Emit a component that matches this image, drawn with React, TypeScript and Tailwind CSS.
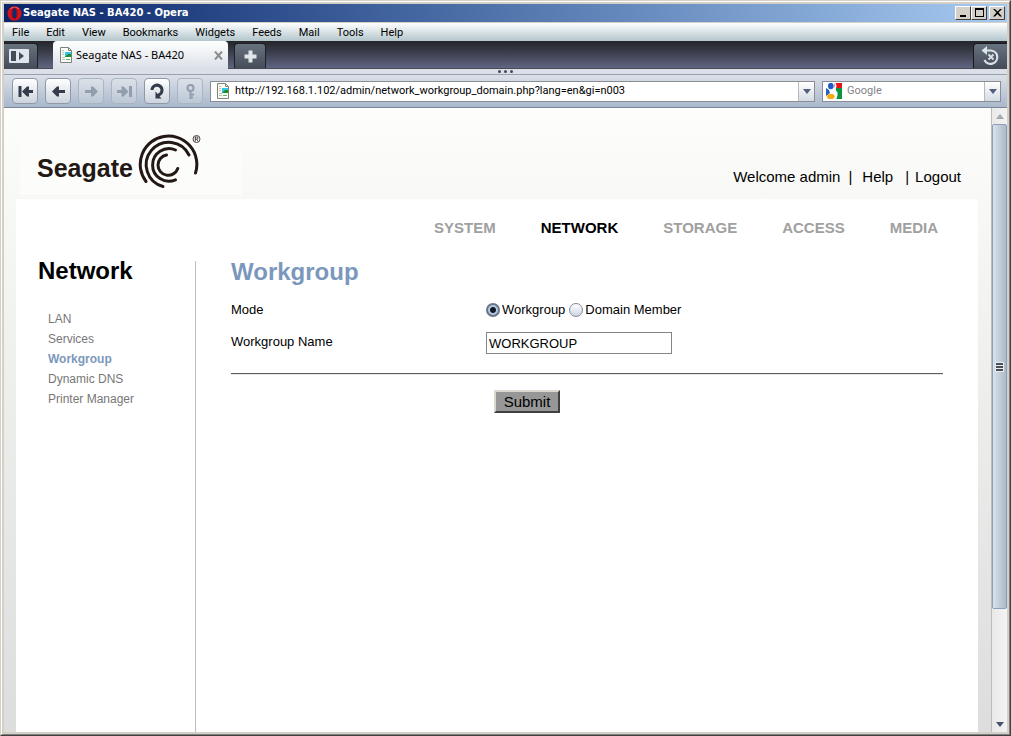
import React, { useState } from 'react';

const menuItems = ['File', 'Edit', 'View', 'Bookmarks', 'Widgets', 'Feeds', 'Mail', 'Tools', 'Help'];
const sections = ['SYSTEM', 'NETWORK', 'STORAGE', 'ACCESS', 'MEDIA'];
const sideLinks = ['LAN', 'Services', 'Workgroup', 'Dynamic DNS', 'Printer Manager'];

const PageIcon = () => (
  <svg width="14" height="16" viewBox="0 0 14 16" className="shrink-0" aria-hidden="true">
    <path d="M1.5 .5h8l3 3v12h-11z" fill="#fbfcf8" stroke="#7c8577" />
    <path d="M9.5 .5v3h3" fill="none" stroke="#7c8577" />
    <path d="M3 3.500h2M3 5.500h2M3 7.500h2M3 10.500h3M3 12.500h3" stroke="#b9c0b4" />
    <rect x="6" y="5" width="6" height="5" fill="#35c5ea" />
    <path d="M6 10l3-3h3v3z" fill="#18902c" />
    <path d="M7 12.500h4" stroke="#5cb567" />
  </svg>
);

const OperaIcon = () => (
  <svg width="15" height="15" viewBox="0 0 15 15" className="shrink-0" aria-hidden="true">
    <ellipse cx="7.5" cy="7.5" rx="7" ry="7.3" fill="#d31219" />
    <path d="M3 3C5 .8 10 .8 12 3" fill="none" stroke="#f06a66" />
    <ellipse cx="7.5" cy="7.5" rx="2.2" ry="5.2" fill="#0d2c72" />
    <ellipse cx="7.5" cy="7.5" rx="2.6" ry="5.6" fill="none" stroke="#8d0a10" strokeWidth=".8" />
  </svg>
);

const GoogleIcon = () => (
  <svg width="16" height="16" viewBox="0 0 16 16" className="shrink-0" aria-hidden="true">
    <path d="M8 0h8v6H9z" fill="#e8121c" />
    <path d="M10 5h6v11H9c3-3 0-5 1-11z" fill="#0a9440" />
    <path d="M0 5l3 2 1 3-4 3z" fill="#2660c8" />
    <ellipse cx="4.8" cy="3" rx="2.8" ry="3.2" fill="#1d5bc9" />
    <path d="M8.500 0c2 2 1 5 0 7 3 2 3 5 1 9" fill="none" stroke="#fff" strokeWidth="1.5" />
    <ellipse cx="4.8" cy="13.4" rx="3.8" ry="2.6" fill="#f4ae13" />
  </svg>
);

const DropArrow = () => (
  <svg width="8" height="5" viewBox="0 0 8 5" aria-hidden="true">
    <path d="M0 0h8L4 5z" fill="#535f81" />
  </svg>
);

const SeagateSwirl = () => (
  <svg width="64" height="56" viewBox="0 0 64 56" className="shrink-0" aria-hidden="true">
    <g fill="none" stroke="#231815" strokeWidth="3" strokeLinecap="round">
      <path d="M8 48.500A28.300 28.300 0 1 1 57.500 40" />
      <path d="M25 53.500A22.500 22.500 0 1 1 51 22" />
      <path d="M37.500 46.800A16.300 16.300 0 1 1 37.500 17" />
      <path d="M28.500 22A10.200 10.200 0 1 0 39.800 35.500" />
    </g>
    <circle cx="58.5" cy="6" r="3.500" fill="none" stroke="#231815" strokeWidth=".8" />
    <path d="M57.300 8.300V4h1.500a1.100 1.100 0 0 1 0 2.200h-1.500M58.800 6.200l1.200 2.100" fill="none" stroke="#231815" strokeWidth=".8" />
  </svg>
);

const navButtons = [
  {
    label: 'Rewind',
    enabled: true,
    icon: <><path d="M3 3v11M16 8.500H9" /><path d="M5 8.500L10 3.500h2v3L10.500 8.500l1.500 2v3h-2z" fill="currentColor" stroke="none" /></>
  },
  {
    label: 'Back',
    enabled: true,
    icon: <><path d="M15 8.500H6" /><path d="M2 8.500L7 3.500h2v3L7.500 8.500l1.500 2v3H7z" fill="currentColor" stroke="none" /></>
  },
  {
    label: 'Forward',
    enabled: false,
    icon: <><path d="M2 8.500h9" /><path d="M15 8.500L10 3.500H8v3L9.500 8.500 8 10.500v3h2z" fill="currentColor" stroke="none" /></>
  },
  {
    label: 'Fast forward',
    enabled: false,
    icon: <><path d="M14.500 3v11M1 8.500h7" /><path d="M12.500 8.500l-5-5h-2v3L7 8.500l-1.500 2v3h2z" fill="currentColor" stroke="none" /></>
  },
  {
    label: 'Reload',
    enabled: true,
    icon: <><path d="M3 7A5 5 0 1 1 10.500 11.500L8 13" strokeWidth="3" /><path d="M6.500 8.500v7h6z" fill="currentColor" stroke="none" /></>
  },
  {
    label: 'Wand',
    enabled: false,
    icon: (
      <g strokeWidth="2">
        <circle cx="8.500" cy="5" r="3" />
        <path d="M8.500 8V16M9 11.500h3M9 14.500h2" />
      </g>
    )
  }
];

const captionButtons = [
  { label: 'Minimize', icon: <path d="M3 8h6v2H3z" /> },
  { label: 'Maximize', icon: <path fillRule="evenodd" d="M2 1h9v9H2zM3 3v6h7V3z" /> },
  { label: 'Close', icon: <path d="M2 2h2l2.500 2.500L9 2h2L7.500 5.500 11 9.500H9L6.500 7 4 9.500H2l3.500-4z" /> }
];

const TitleBar = () => (
  <header className="flex h-[18px] shrink-0 items-center bg-linear-to-r from-[#0a246a] to-[#a6caf0] pl-[3px] pr-0.5">
    <OperaIcon />
    <h1 className="flex-1 pl-px font-['DejaVu_Sans','Noto_Sans',sans-serif] text-[10px] font-bold leading-4 text-white">
      Seagate NAS - BA420 - Opera
    </h1>
    {captionButtons.map((button) => (
      <button
        key={button.label}
        aria-label={button.label}
        className="flex h-3.5 w-4 items-center justify-center border border-white border-b-[#404040] border-r-[#404040] bg-[#d4d0c8] last:ml-0.5"
      >
        <svg width="13" height="12" viewBox="0 0 13 12" className="shrink-0">{button.icon}</svg>
      </button>
    ))}
  </header>
);

const TabBar = () => (
  <div className="flex h-7 shrink-0 items-end border-b border-[#4a4a56] bg-linear-to-b from-[#232529] to-[#606582]">
    <button
      aria-label="Panels"
      className="flex h-[25px] w-[34px] items-center justify-center rounded-tr border-r border-t border-[#1f2226] bg-linear-to-b from-[#68727f] to-[#454d59] pr-1"
    >
      <svg width="20" height="16" viewBox="0 0 20 16">
        <rect x="0" y="1" width="20" height="14" rx="1" fill="#dfe5ec" />
        <path d="M2 3h5v10H2zM10 4l5 4-5 4z" fill="#434b59" />
      </svg>
    </button>
    <div className="-mb-px ml-[15px] flex h-7 w-[175px] items-center rounded-t bg-linear-to-b from-white to-[#dbe0e8] pl-1.5 pr-1">
      <PageIcon />
      <span className="flex-1 whitespace-nowrap pl-[3px] text-[11px]">Seagate NAS - BA420</span>
      <button aria-label="Close tab" className="flex h-4 w-3 items-center justify-center">
        <svg width="9" height="9" viewBox="0 0 9 9"><path d="M1 .5l7 8M8 .5l-7 8" stroke="#8b8b8b" strokeWidth="2" /></svg>
      </button>
    </div>
    <button
      aria-label="New tab"
      className="ml-1.5 flex h-[25px] w-8 items-center justify-center rounded-t border border-b-0 border-[#1f2226] bg-linear-to-b from-[#68727f] to-[#454d59]"
    >
      <svg width="13" height="13" viewBox="0 0 13 13"><path d="M6.500 .5v12M.5 6.500h12" stroke="#e2e5ea" strokeWidth="4" /></svg>
    </button>
    <div className="flex-1" />
    <button
      aria-label="Closed tabs"
      className="flex h-[25px] w-[34px] items-center justify-center rounded-tl border-l border-t border-[#16181b] bg-linear-to-b from-[#68727f] to-[#454d59]"
    >
      <svg width="20" height="20" viewBox="0 0 20 20" fill="none" stroke="#dce2ea">
        <path d="M5 4.500h5a6.700 6.700 0 1 1-6.500 9.500" strokeWidth="2.200" />
        <path d="M6 0v9L.5 4.500z" fill="#dce2ea" stroke="none" />
        <path d="M7.500 8.500l5 5M12.500 8.500l-5 5" strokeWidth="1.800" />
      </svg>
    </button>
  </div>
);

const AddressBar = () => (
  <div className="flex h-[33px] shrink-0 items-center border-b border-[#7f8794] bg-linear-to-b from-[#dbe0e8] to-[#a9b8cc] pl-2 pr-1.5">
    <div className="flex gap-[7px]">
      {navButtons.map((button) => (
        <button
          key={button.label}
          aria-label={button.label}
          disabled={!button.enabled}
          className="flex h-[26px] w-[26px] items-center justify-center rounded border border-[#8f99a8] bg-linear-to-b from-white to-[#ccd4de] text-[#343c4b] disabled:border-[#aab4c2] disabled:from-[#dce1e8] disabled:to-[#bdc8d6] disabled:text-[#929dad]"
        >
          <svg width="17" height="17" viewBox="0 0 17 17" fill="none" stroke="currentColor" strokeWidth="3">
            {button.icon}
          </svg>
        </button>
      ))}
    </div>
    <div className="ml-[7px] flex h-[21px] flex-1 items-center border border-[#8a8d93] bg-white pl-[5px]">
      <PageIcon />
      <input
        aria-label="Address"
        className="min-w-0 flex-1 pl-[5px] pt-px font-[Roboto,'Noto_Sans',sans-serif] text-[11px] outline-none"
        defaultValue="http://192.168.1.102/admin/network_workgroup_domain.php?lang=en&gi=n003"
      />
      <button aria-label="Show addresses" className="flex h-full w-4 items-center justify-center border-l border-[#b4b8bf] bg-linear-to-b from-white to-[#d5dbe4]">
        <DropArrow />
      </button>
    </div>
    <div className="ml-[7px] flex h-[21px] w-[179px] items-center border border-[#8a8d93] bg-white pl-[3px]">
      <GoogleIcon />
      <input
        aria-label="Search"
        className="min-w-0 flex-1 pl-[5px] pt-px font-[Roboto,'Noto_Sans',sans-serif] text-[11px] outline-none placeholder:text-[#858585]"
        placeholder="Google"
      />
      <button aria-label="Search engines" className="flex h-full w-4 items-center justify-center border-l border-[#b4b8bf] bg-linear-to-b from-white to-[#d5dbe4]">
        <DropArrow />
      </button>
    </div>
  </div>
);

const ScrollBar = () => (
  <div className="flex w-4 shrink-0 flex-col border-l border-[#bcbcbc] bg-linear-to-r from-[#e9e9e9] to-[#f3f3f3]">
    <button aria-label="Scroll up" className="flex h-4 shrink-0 items-center justify-center">
      <svg width="8" height="5" viewBox="0 0 8 5"><path d="M4 0l4 5H0z" fill="#a3a8b0" /></svg>
    </button>
    <div className="flex flex-[485] items-center justify-center rounded-xs border border-[#8ba0bd] bg-linear-to-r from-[#dbe2e9] to-[#abbacb]">
      <svg width="9" height="10" viewBox="0 0 9 10">
        <rect width="9" height="10" fill="#e6ebf0" />
        <path d="M1 1h7v2H1zM1 4h7v2H1zM1 7h7v2H1z" fill="#4a4f58" />
      </svg>
    </div>
    <div className="flex-[107]" />
    <button aria-label="Scroll down" className="flex h-4 shrink-0 items-center justify-center">
      <svg width="8" height="5" viewBox="0 0 8 5"><path d="M0 0h8L4 5z" fill="#46536b" /></svg>
    </button>
  </div>
);

const radioClass =
  'h-3.5 w-3.5 appearance-none rounded-full border border-[#7d8794] bg-linear-to-b from-white to-[#ccd6e4] checked:border-2 checked:border-[#68768a] checked:bg-[radial-gradient(circle,#111827_35%,#b7c8df_50%)]';

const WorkgroupForm = () => {
  const [mode, setMode] = useState('Workgroup');

  return (
    <form className="min-w-0 flex-1 px-[35px] text-[13px] leading-5" onSubmit={(e) => e.preventDefault()}>
      <h2 className="text-2xl leading-[22px] font-bold text-[#7b98bc]">Workgroup</h2>
      <div className="mt-[17px] grid grid-cols-[255px_1fr]">
        <span id="mode-label">Mode</span>
        <div role="radiogroup" aria-labelledby="mode-label" className="flex gap-1">
          {['Workgroup', 'Domain Member'].map((name) => (
            <label key={name} className="flex items-center gap-0.5">
              <input type="radio" name="mode" className={radioClass} checked={mode === name} onChange={() => setMode(name)} />
              {name}
            </label>
          ))}
        </div>
      </div>
      <div className="mt-3 grid grid-cols-[255px_1fr] items-start">
        <label htmlFor="workgroup-name">Workgroup Name</label>
        <input
          id="workgroup-name"
          className="h-[22px] w-[186px] border border-[#858585] bg-white px-0.5"
          defaultValue="WORKGROUP"
        />
      </div>
      <hr className="mt-[19px] border-b border-t border-b-[#e4e4e4] border-t-[#5f5f5f]" />
      <div className="mt-[15px] grid grid-cols-[255px_1fr]">
        <button
          type="submit"
          className="col-start-2 ml-2 h-[23px] w-[66px] border-2 border-b-[#404040] border-l-[#dcd8d0] border-r-[#404040] border-t-[#dcd8d0] bg-[#979797] text-[15px] leading-[19px]"
        >
          Submit
        </button>
      </div>
    </form>
  );
};

const AdminPage = () => (
  <div className="flex min-w-0 flex-1 flex-col bg-linear-to-b from-[#fdfdfb] to-[#dcdddc] px-3 font-['Liberation_Sans',Arial,sans-serif] text-black">
    <div className="flex h-[91px] shrink-0 items-start justify-between">
      <div className="ml-1 mt-3 flex h-[75px] w-[222px] items-start bg-[#fcfcfa] pl-[17px] pt-[13px]">
        <span className="pt-[21px] text-[25px] leading-7 font-bold text-[#231815]">Seagate</span>
        <div className="ml-[5px]"><SeagateSwirl /></div>
      </div>
      <div className="mt-[59px] flex pr-[18px] text-[15px] leading-5">
        <span>Welcome admin</span>
        <span className="ml-2">|</span>
        <a href="#help" className="ml-2.5">Help</a>
        <span className="ml-3">|</span>
        <a href="#logout" className="ml-1.5">Logout</a>
      </div>
    </div>
    <div className="mr-px flex flex-1 flex-col bg-white">
      <nav className="flex h-[62px] shrink-0 items-center justify-end gap-[45px] pb-1 pr-10 text-[15px] font-bold text-[#a0a0a0]">
        {sections.map((name) => (
          <a key={name} href={`#${name.toLowerCase()}`} className={name === 'NETWORK' ? 'text-black' : ''}>
            {name}
          </a>
        ))}
      </nav>
      <div className="flex flex-1">
        <aside className="w-[180px] shrink-0 border-r border-[#bdbdbd] pl-[22px]">
          <h2 className="text-2xl leading-5 font-bold">Network</h2>
          <ul className="mt-7 pl-2.5 text-[12px] leading-5 text-[#777777]">
            {sideLinks.map((name) => (
              <li key={name}>
                <a href="#" className={name === 'Workgroup' ? 'font-bold text-[#7b98bc]' : ''}>{name}</a>
              </li>
            ))}
          </ul>
        </aside>
        <WorkgroupForm />
      </div>
    </div>
  </div>
);

export default function App() {
  return (
    <div className="flex h-screen min-h-[480px] flex-col border border-b-[#404040] border-l-[#d4d0c8] border-r-[#404040] border-t-[#d4d0c8] font-['Noto_Sans',sans-serif] text-black">
      <div className="flex min-h-0 flex-1 flex-col border border-b-[#808080] border-l-white border-r-[#808080] border-t-white bg-[#d4d0c8] p-0.5">
        <TitleBar />
        {/* Menu bar */}
        <nav className="mt-px flex h-[18px] shrink-0 items-center gap-[17px] bg-linear-to-b from-white to-[#b3c6cc] pl-2 pt-0.5 font-[Roboto,'Noto_Sans',sans-serif] text-[11px] leading-4">
          {menuItems.map((item) => (
            <button key={item}>{item}</button>
          ))}
        </nav>
        <TabBar />
        <div className="flex h-1.5 shrink-0 items-center justify-center gap-[3px] border-b border-[#9aa1ad] bg-[#dbe0e8]">
          {[0, 1, 2].map((dot) => (
            <span key={dot} className="h-[3px] w-[3px] rounded-full bg-[#444a55]" />
          ))}
        </div>
        <AddressBar />
        <div className="flex min-h-0 flex-1">
          <AdminPage />
          <ScrollBar />
        </div>
      </div>
    </div>
  );
}
